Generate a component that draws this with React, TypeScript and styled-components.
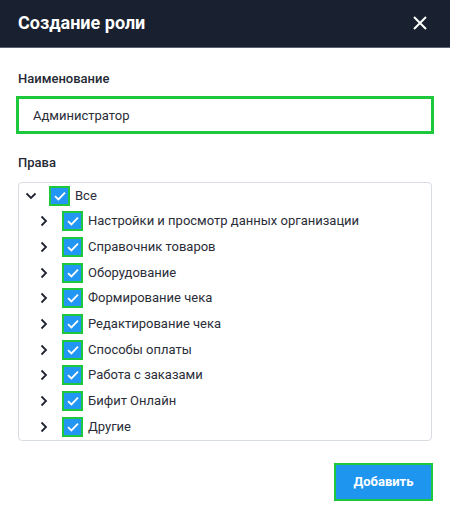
import React from "react";
import styled, { createGlobalStyle } from "styled-components";

const Global = createGlobalStyle`
  html, body { margin: 0; padding: 0; background: #ffffff; }
  body { font-family: Roboto, "Noto Sans", Arial, sans-serif; }
  * { box-sizing: border-box; }
`;

const Dialog = styled.div`
  width: 450px;
  height: 517px;
  display: flex;
  flex-direction: column;
  background: #fff;
`;

const Header = styled.div`
  height: 48px;
  flex: none;
  background: #19202f;
  border-bottom: 1px solid #5c6272;
  display: flex;
  align-items: center;
  justify-content: space-between;
  padding: 0 22px 1px 18px;
`;

const Title = styled.h1`
  margin: 0;
  color: #fff;
  font-size: 18px;
  font-weight: 700;
  line-height: 22px;
`;

const CloseBtn = styled.button`
  border: 0;
  background: transparent;
  padding: 0;
  width: 16px;
  height: 16px;
  display: flex;
  align-items: center;
  justify-content: center;
  cursor: pointer;
`;

const Body = styled.div`
  flex: 1;
  display: flex;
  flex-direction: column;
  padding: 21px 18px 0 18px;
`;

const Label = styled.div`
  font-size: 13px;
  font-weight: 500;
  line-height: 20px;
  color: #262a36;
`;

const Input = styled.input`
  margin: 7px -2px 0 -2px;
  height: 38px;
  border: 3px solid #1ec83c;
  padding: 0 14px;
  font-family: inherit;
  font-size: 13px;
  color: #2a2d38;
  outline: none;
  background: #fff;
`;

const SectionLabel = styled(Label)`
  margin-top: 19px;
`;

const Tree = styled.div`
  margin-top: 9px;
  border: 1px solid #d8dce3;
  border-radius: 4px;
  display: flex;
  flex-direction: column;
`;

const Row = styled.div<{ $level: number }>`
  height: 25.67px;
  display: flex;
  align-items: center;
  padding-left: ${(p) => (p.$level === 0 ? 5.5 : 18.5)}px;
`;

const Toggle = styled.span`
  width: 12px;
  height: 16px;
  display: flex;
  align-items: center;
  justify-content: center;
  margin-right: 12.5px;
  flex: none;
`;

const Check = styled.span`
  width: 21px;
  height: 20px;
  border: 2px solid #1ec83c;
  background: #2196f3;
  display: flex;
  align-items: center;
  justify-content: center;
  flex: none;
  margin-right: 5px;
`;

const RowText = styled.span`
  font-size: 13px;
  color: #2a2d38;
  line-height: 20px;
  white-space: nowrap;
`;

const Footer = styled.div`
  display: flex;
  justify-content: flex-end;
  margin-top: 22px;
  margin-right: -1px;
`;

const PrimaryButton = styled.button`
  width: 99px;
  height: 38px;
  background: #1e96f0;
  border: 2px solid #1ec83c;
  color: #fff;
  font-family: inherit;
  font-size: 13px;
  font-weight: 700;
  cursor: pointer;
`;

const ChevronDown = () => (
  <svg width="12" height="8" viewBox="0 0 12 8">
    <path d="M1.5 1.5 L6 6 L10.5 1.5" fill="none" stroke="#1f2330" strokeWidth="1.8" />
  </svg>
);

const ChevronRight = () => (
  <svg width="8" height="12" viewBox="0 0 8 12">
    <path d="M1.5 1.5 L6 6 L1.5 10.5" fill="none" stroke="#1f2330" strokeWidth="1.8" />
  </svg>
);

const CheckMark = () => (
  <svg width="14" height="12" viewBox="0 0 14 12">
    <path d="M2 6.2 L5.4 9.4 L12 2.6" fill="none" stroke="#fff" strokeWidth="1.8" />
  </svg>
);

const items = [
  "Настройки и просмотр данных организации",
  "Справочник товаров",
  "Оборудование",
  "Формирование чека",
  "Редактирование чека",
  "Способы оплаты",
  "Работа с заказами",
  "Бифит Онлайн",
  "Другие",
];

export default function App() {
  return (
    <Dialog>
      <Global />
      <Header>
        <Title>Создание роли</Title>
        <CloseBtn aria-label="close">
          <svg width="14" height="14" viewBox="0 0 14 14">
            <path d="M1 1 L13 13 M13 1 L1 13" stroke="#fff" strokeWidth="2" />
          </svg>
        </CloseBtn>
      </Header>
      <Body>
        <Label>Наименование</Label>
        <Input defaultValue="Администратор" />
        <SectionLabel>Права</SectionLabel>
        <Tree>
          <Row $level={0}>
            <Toggle><ChevronDown /></Toggle>
            <Check><CheckMark /></Check>
            <RowText>Все</RowText>
          </Row>
          {items.map((t) => (
            <Row $level={1} key={t}>
              <Toggle><ChevronRight /></Toggle>
              <Check><CheckMark /></Check>
              <RowText>{t}</RowText>
            </Row>
          ))}
        </Tree>
        <Footer>
          <PrimaryButton>Добавить</PrimaryButton>
        </Footer>
      </Body>
    </Dialog>
  );
}
